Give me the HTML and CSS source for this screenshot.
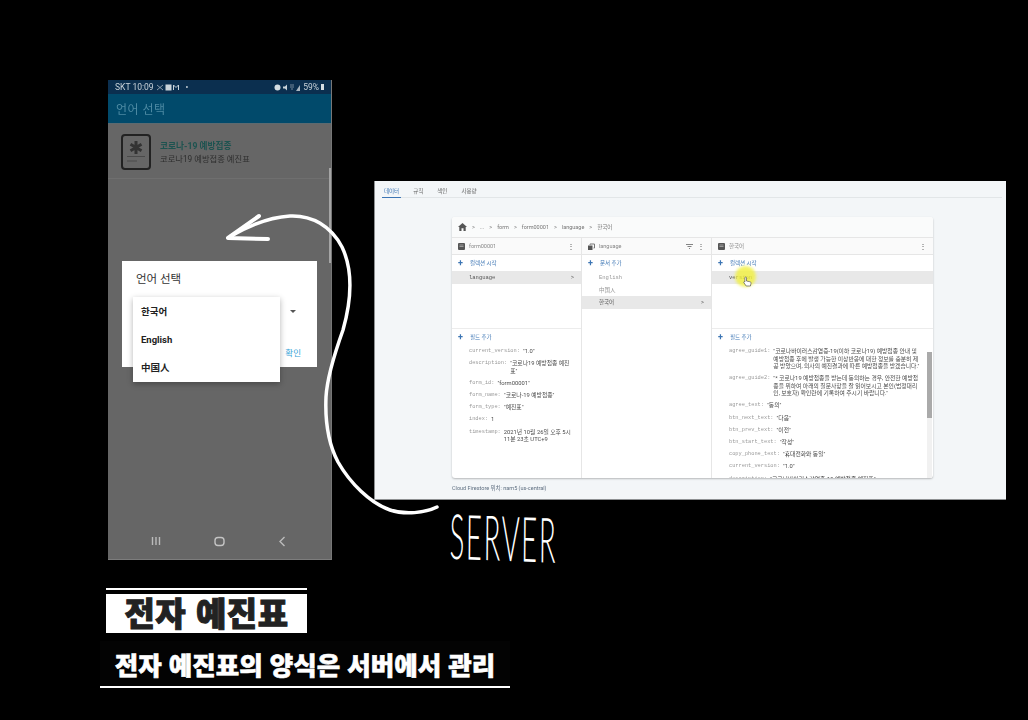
FILE: index.html
```html
<!DOCTYPE html>
<html lang="ko">

<head>
    <meta charset="UTF-8">
    <title>전자 예진표</title>
    <link rel="stylesheet" href="styles.css">
</head>

<body>
    <div class="stage">

        <!-- phone capture -->
        <div class="phone">
            <div class="status">
                <div class="status-left">
                    <span>SKT 10:09</span>
                    <svg width="26" height="7" viewBox="0 0 26 7">
                        <path d="M0 1l3 2.500L6 1M0 6l3-2.500L6 6" fill="none" stroke="#aab6c0" stroke-width=".8" />
                        <rect x="8.500" y="0.500" width="6" height="6" fill="#c9d3da" />
                        <path d="M16.500 6V1l2.500 2.500L21.500 1v5" fill="none" stroke="#c9d3da" stroke-width="1" />
                    </svg>
                    <span>•</span>
                </div>
                <div class="status-right">
                    <svg width="27" height="7" viewBox="0 0 27 7">
                        <circle cx="3.500" cy="3.500" r="3" fill="#d5dde2" />
                        <path d="M9 2.500h2l2-2v6l-2-2H9z" fill="#c9d3da" />
                        <path d="M16 1h4M16 3h4M17 5h2" stroke="#8fa0ad" stroke-width=".8" />
                        <path d="M22 7l4-6v6z" fill="#aab6c0" />
                    </svg>
                    <span>59%</span>
                    <i class="battery"></i>
                </div>
            </div>
            <div class="appbar">언어 선택</div>
            <div class="form-row">
                <svg class="form-icon" width="30" height="36" viewBox="0 0 30 36">
                    <rect x="1" y="1" width="28" height="34" rx="3" fill="none" stroke="#222" stroke-width="2" />
                    <path d="M15 7v13M9.500 10.200l11 6.500M20.500 10.200l-11 6.500" stroke="#333" stroke-width="3" />
                    <path d="M6 22.500h18M6 27h10" stroke="#4a4a4a" stroke-width="1" />
                </svg>
                <div>
                    <div class="form-title">코로나-19 예방접종</div>
                    <div class="form-sub">코로나19 예방접종 예진표</div>
                </div>
            </div>
            <div class="phone-space"></div>
            <div class="navbar">
                <svg width="10" height="10" viewBox="0 0 10 10">
                    <path d="M1.500 1v8M5 1v8M8.500 1v8" stroke="#bbb" stroke-width="1.400" />
                </svg>
                <svg width="11" height="11" viewBox="0 0 11 11">
                    <rect x="1" y="1.500" width="9" height="8" rx="3" fill="none" stroke="#c4c4c4" stroke-width="1.400" />
                </svg>
                <svg width="8" height="11" viewBox="0 0 8 11">
                    <path d="M6.500 1L2 5.500l4.500 4.500" fill="none" stroke="#bbb" stroke-width="1.400" />
                </svg>
            </div>
            <div class="phone-scroll"></div>

            <div class="dialog">
                <div class="dialog-title">언어 선택</div>
                <div class="caret"></div>
                <div class="dialog-ok">확인</div>
            </div>
            <ul class="menu">
                <li>한국어</li>
                <li>English</li>
                <li>中国人</li>
            </ul>
        </div>

        <!-- firestore console capture -->
        <div class="console">
            <div class="tabs">
                <span class="tab active">데이터</span>
                <span class="tab">규칙</span>
                <span class="tab">색인</span>
                <span class="tab">사용량</span>
            </div>
            <div class="panel">
                <div class="crumbs">
                    <svg width="9" height="8" viewBox="0 0 9 8">
                        <path d="M4.500 0L0 4h1.300v4h2.200V5.300h2V8h2.200V4H9z" fill="#555" />
                    </svg>
                    <span>&gt;</span><span>...</span><span>&gt;</span><span>form</span><span>&gt;</span><span>form00001</span><span>&gt;</span><span>language</span><span>&gt;</span><span>한국어</span>
                </div>
                <div class="cols">
                    <div class="col col-form">
                        <div class="col-head">
                            <svg width="7" height="7" viewBox="0 0 7 7">
                                <rect width="7" height="7" rx="1" fill="#555" />
                                <path d="M1.500 2h4M1.500 3.500h4" stroke="#ccc" stroke-width=".6" />
                            </svg>
                            <span>form00001</span><b class="dots">⋮</b>
                        </div>
                        <div class="col-top">
                            <div class="add"><em>+</em>컬렉션 시작</div>
                            <div class="item selected mono">language<span>&gt;</span></div>
                        </div>
                        <div class="col-fields">
                            <div class="add"><em>+</em>필드 추가</div>
                            <div class="field"><span class="key">current_version:</span><span class="val">"1.0"</span></div>
                            <div class="field"><span class="key">description:</span><span class="val">"코로나19 예방접종 예진표"</span></div>
                            <div class="field"><span class="key">form_id:</span><span class="val">"form00001"</span></div>
                            <div class="field"><span class="key">form_name:</span><span class="val">"코로나-19 예방접종"</span></div>
                            <div class="field"><span class="key">form_type:</span><span class="val">"예진표"</span></div>
                            <div class="field"><span class="key">index:</span><span class="val">1</span></div>
                            <div class="field"><span class="key">timestamp:</span><span class="val">2021년 10월 26일 오후 5시 11분 23초 UTC+9</span></div>
                        </div>
                    </div>
                    <div class="col col-lang">
                        <div class="col-head">
                            <svg width="7" height="7" viewBox="0 0 7 7">
                                <path d="M0 2.500h4.500V7H0z" fill="#555" />
                                <path d="M2 1v.8M2 1h4.500v4h-1" fill="none" stroke="#777" stroke-width="1" />
                            </svg>
                            <span>language</span>
                            <svg width="7" height="5" viewBox="0 0 7 5">
                                <path d="M0 .5h7M1.500 2.500h4M3 4.500h1" stroke="#666" stroke-width=".8" />
                            </svg>
                            <b class="dots">⋮</b>
                        </div>
                        <div class="add"><em>+</em>문서 추가</div>
                        <div class="item mono light">English</div>
                        <div class="item light">中国人</div>
                        <div class="item selected">한국어<span>&gt;</span></div>
                    </div>
                    <div class="col col-doc">
                        <div class="col-head">
                            <svg width="7" height="7" viewBox="0 0 7 7">
                                <rect width="7" height="7" rx="1" fill="#555" />
                                <path d="M1.500 2h4M1.500 3.500h4" stroke="#ccc" stroke-width=".6" />
                            </svg>
                            <span>한국어</span><b class="dots">⋮</b>
                        </div>
                        <div class="col-top">
                            <div class="add"><em>+</em>컬렉션 시작</div>
                            <div class="item selected mono">version</div>
                        </div>
                        <div class="col-fields">
                            <div class="add"><em>+</em>필드 추가</div>
                            <div class="field"><span class="key">agree_guide1:</span><span class="val">"코로나바이러스감염증-19(이하 코로나19) 예방접종 안내 및 예방접종 후에 발생 가능한 이상반응에 대한 정보를 충분히 제공 받았으며, 의사의 예진결과에 따른 예방접종을 받겠습니다."</span></div>
                            <div class="field"><span class="key">agree_guide2:</span><span class="val">"* 코로나19 예방접종을 받는데 동의하는 경우, 안전한 예방접종을 위하여 아래의 질문사항을 잘 읽어보시고 본인(법정대리인, 보호자) 확인란에 기록하여 주시기 바랍니다."</span></div>
                            <div class="field"><span class="key">agree_text:</span><span class="val">"동의"</span></div>
                            <div class="field"><span class="key">btn_next_text:</span><span class="val">"다음"</span></div>
                            <div class="field"><span class="key">btn_prev_text:</span><span class="val">"이전"</span></div>
                            <div class="field"><span class="key">btn_start_text:</span><span class="val">"작성"</span></div>
                            <div class="field"><span class="key">copy_phone_text:</span><span class="val">"휴대전화와 동일"</span></div>
                            <div class="field"><span class="key">current_version:</span><span class="val">"1.0"</span></div>
                            <div class="field"><span class="key">description:</span><span class="val">"코로나바이러스감염증-19 예방접종 예진표"</span></div>
                        </div>
                        <div class="doc-scroll"></div>
                    </div>
                </div>
            </div>
            <div class="location">Cloud Firestore 위치: nam5 (us-central)</div>
        </div>

        <div class="click-glow"></div>
        <svg class="pointer" width="9" height="11" viewBox="0 0 9 11">
            <path d="M2.500 1c.8 0 1 .5 1 1.200V5l3.200.7c1 .2 1.500.8 1.300 1.700L7.400 10H3.200L.8 6.600c-.4-.7.500-1.300 1.100-.7V2.200c0-.7 0-1.200.600-1.200z" fill="#fff" stroke="#555" stroke-width=".7" />
        </svg>

        <!-- hand drawn arrow from server to phone -->
        <svg class="arrow" width="1028" height="720" viewBox="0 0 1028 720">
            <path d="M437 507C425 513 405 515 390 510C370 503 350 483 338 462C328 443 325 420 326 397C327 378 333 358 343 330C352 298 353 270 342 247C331 226 312 215 290 216C272 217 252 224 231 236" fill="none" stroke="#fff" stroke-width="3.500" stroke-linecap="round" />
            <path d="M259 216L228 238L268 239" fill="none" stroke="#fff" stroke-width="4" stroke-linecap="round" stroke-linejoin="round" />
        </svg>

        <div class="server">SERVER</div>

        <div class="caption">
            <div class="caption-top">
                <h1>전자 예진표</h1>
            </div>
            <div class="caption-bottom">
                <h2>전자 예진표의 양식은 서버에서 관리</h2>
            </div>
        </div>
    </div>
</body>

</html>
```
FILE: styles.css
```css
* {
    box-sizing: border-box;
}

body {
    margin: 0;
    background-color: #000;
    font-family: "Roboto", "Noto Sans CJK KR", sans-serif;
}

.stage {
    position: relative;
    width: 1028px;
    height: 720px;
    overflow: hidden;
    background-color: #000;
}

/* phone */
.phone {
    position: absolute;
    left: 108px;
    top: 80px;
    width: 224px;
    height: 480px;
    display: flex;
    flex-direction: column;
    background-color: #666;
    border-bottom: 1px solid #7d7d7d;
    border-right: 1px solid #777;
    color: #222;
}

.status {
    height: 14px;
    padding: 0 7px 0 7px;
    display: flex;
    justify-content: space-between;
    align-items: center;
    background-color: #0b2f4f;
    color: #c9d3da;
    font-size: 8.500px;
    filter: blur(0.3px);
}

.status-left,
.status-right {
    display: flex;
    gap: 3px;
    align-items: center;
}

.status-right {
    gap: 2px;
}

.battery {
    width: 3px;
    height: 6px;
    background-color: #d5dde2;
}

.appbar {
    height: 30px;
    padding: 0 8px;
    display: flex;
    align-items: center;
    background-color: #014a6b;
    color: #4d8aa3;
    font-size: 12px;
    letter-spacing: 0.5px;
    border-bottom: 1px solid #5c6a70;
    filter: blur(0.3px);
}

.form-row {
    height: 55px;
    padding: 10px 0 0 13px;
    display: flex;
    gap: 9px;
    border-bottom: 1px solid #6f6f6f;
    filter: blur(0.3px);
}

.form-title {
    margin-top: 5px;
    font-size: 8.700px;
    font-weight: 700;
    color: #1d5350;
}

.form-sub {
    font-size: 8.300px;
    color: #2e2e2e;
}

.phone-space {
    flex: 1;
}

.navbar {
    height: 26px;
    padding: 3px 45px 0 43px;
    display: flex;
    justify-content: space-between;
    align-items: flex-start;
}

.phone-scroll {
    position: absolute;
    right: 0;
    top: 88px;
    width: 2px;
    height: 95px;
    background-color: #a5a5a5;
}

.dialog {
    position: absolute;
    left: 14px;
    top: 181px;
    width: 195px;
    height: 106px;
    background-color: #fff;
}

.dialog-title {
    padding: 9px 0 0 14px;
    font-size: 11.500px;
    color: #333;
}

.caret {
    position: absolute;
    left: 168px;
    top: 49px;
    border: 3px solid transparent;
    border-top: 3px solid #555;
}

.dialog-ok {
    position: absolute;
    right: 16px;
    bottom: 9px;
    font-size: 8.500px;
    color: #35a4d8;
}

.menu {
    position: absolute;
    left: 25px;
    top: 217px;
    width: 147px;
    margin: 0;
    padding: 1px 0 0;
    list-style: none;
    background-color: #fff;
    box-shadow: 0 2px 6px rgba(0, 0, 0, 0.3);
}

.menu li {
    height: 28px;
    padding-left: 8px;
    line-height: 28px;
    font-size: 9.500px;
    font-weight: 700;
    color: #222;
}

/* console */
.console {
    position: absolute;
    left: 374px;
    top: 181px;
    width: 632px;
    height: 319px;
    display: flex;
    flex-direction: column;
    background-color: #f3f6f8;
    border-left: 1px solid #8e9193;
    border-bottom: 1px solid #8e9193;
    font-size: 5.500px;
    color: #666;
    filter: blur(0.5px);
}

.tabs {
    height: 17px;
    margin: 0 4px 0 7px;
    display: flex;
    gap: 10px;
    align-items: flex-start;
    border-bottom: 1px solid #e2e6e8;
}

.tab {
    height: 17px;
    padding: 6px 2px 0;
}

.tab.active {
    color: #3c75b4;
    border-bottom: 1px solid #3c75b4;
}

.panel {
    width: 481px;
    height: 261px;
    margin: 19px 0 0 77px;
    display: flex;
    flex-direction: column;
    background-color: #fff;
    border-radius: 3px;
    box-shadow: 0 1px 2px rgba(0, 0, 0, 0.25);
}

.crumbs {
    height: 21px;
    padding-left: 6px;
    display: flex;
    gap: 5px;
    align-items: center;
    background-color: #fafbfb;
    border-bottom: 1px solid #e6e6e6;
    color: #777;
    border-radius: 3px 3px 0 0;
}

.cols {
    flex: 1;
    min-height: 0;
    display: grid;
    grid-template-columns: 130px 130px 221px;
}

.col {
    position: relative;
    min-height: 0;
    overflow: hidden;
    border-right: 1px solid #e6e6e6;
}

.col-doc {
    border-right: 0;
}

.col-head {
    height: 17px;
    padding: 0 6px;
    display: flex;
    gap: 4px;
    align-items: center;
    background-color: #fafafa;
    border-bottom: 1px solid #e6e6e6;
    color: #888;
}

.col-head span {
    flex: 1;
}

.dots {
    font-size: 8px;
    font-weight: 400;
    color: #555;
}

.col-top {
    height: 74px;
    border-bottom: 1px solid #ececec;
}

.add {
    height: 16px;
    padding-left: 6px;
    display: flex;
    align-items: center;
    color: #3c75b4;
}

.add em {
    width: 12px;
    font-style: normal;
    font-size: 9px;
    font-weight: 700;
}

.item {
    height: 12.500px;
    padding: 0 7px 0 17px;
    display: flex;
    justify-content: space-between;
    align-items: center;
    color: #555;
}

.item.selected {
    background-color: #e8e8e8;
}

.item.light {
    color: #999;
}

.mono {
    font-family: "Liberation Mono", monospace;
}

.col-fields .add {
    margin-bottom: 3px;
}

.field {
    margin: 0 8px 4.700px 17px;
    display: flex;
    gap: 3px;
    line-height: 7.500px;
}

.key {
    flex: none;
    font-family: "Liberation Mono", monospace;
    font-size: 5.300px;
    color: #999;
}

.val {
    font-size: 5.800px;
    color: #4a4a4a;
}

.col-form .field {
    margin-right: 7px;
}

.col-doc .field {
    margin-right: 10px;
}

.doc-scroll {
    position: absolute;
    right: 1px;
    top: 114px;
    width: 5px;
    height: 130px;
    background: linear-gradient(#aaa 66px, #f1f1f1 66px);
}

.location {
    margin: 6px 0 0 77px;
    font-size: 5.500px;
    color: #5f6f80;
}

/* overlays */
.click-glow {
    position: absolute;
    left: 735px;
    top: 266px;
    width: 21px;
    height: 21px;
    border-radius: 50%;
    background-color: rgba(241, 240, 60, 0.8);
    filter: blur(1.500px);
}

.pointer {
    position: absolute;
    left: 743px;
    top: 276px;
}

.arrow {
    position: absolute;
    left: 0;
    top: 0;
}

.server {
    position: absolute;
    left: 450px;
    top: 495px;
    font-family: "Lato", sans-serif;
    font-weight: 300;
    font-size: 50px;
    line-height: 64px;
    letter-spacing: 3px;
    color: #fff;
    white-space: nowrap;
    transform: scale(0.55, 1.25) rotate(1deg);
    transform-origin: left top;
}

/* caption */
.caption {
    position: absolute;
    left: 100px;
    top: 588px;
    width: 410px;
}

.caption-top {
    width: 201px;
    margin-left: 6px;
    padding-top: 4px;
    border-top: 2px solid #fff;
}

.caption h1 {
    height: 39px;
    margin: 0;
    background-color: #fff;
    color: #222;
    font-family: "Noto Sans CJK KR", sans-serif;
    font-size: 33px;
    font-weight: 900;
    line-height: 36px;
    letter-spacing: 0.5px;
    text-align: center;
    -webkit-text-stroke: 1px #222;
}

.caption-bottom {
    height: 47px;
    margin-top: 8px;
    border-bottom: 2px solid #fff;
    background-color: #030303;
}

.caption h2 {
    margin: 0;
    color: #fff;
    font-family: "Noto Sans CJK KR", sans-serif;
    font-size: 25.500px;
    font-weight: 900;
    line-height: 46px;
    text-align: center;
    white-space: nowrap;
    -webkit-text-stroke: 0.6px #fff;
}
```
